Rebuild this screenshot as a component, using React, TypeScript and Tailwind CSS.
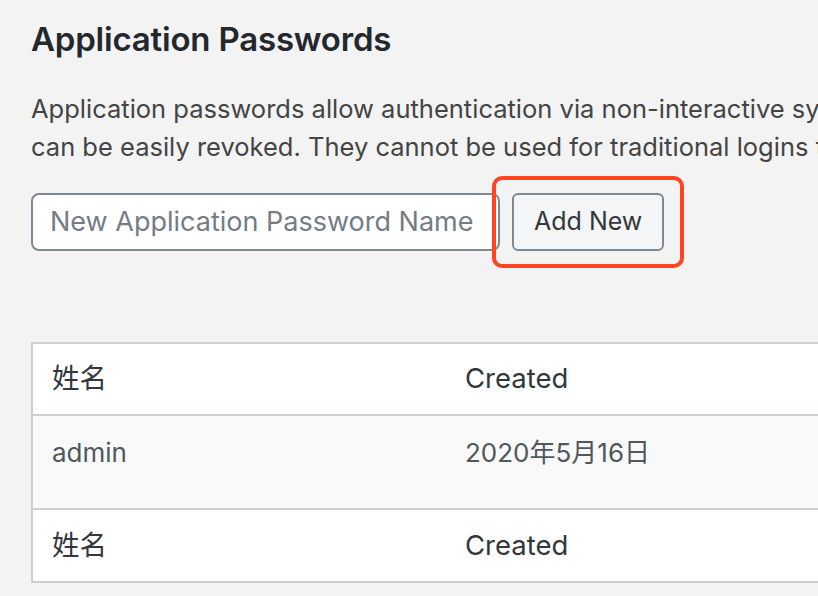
import React from 'react';

const font = "font-['Inter','Noto_Sans_CJK_SC',sans-serif]";

export default function App() {
  return (
    <div className={`relative w-[818px] h-[596px] overflow-hidden bg-[#f3f3f4] ${font}`}>
      <div className="pl-[31px] pt-[17px] w-[1400px]">
        <h2 className="text-[33px] leading-[44px] font-semibold text-[#23282d] tracking-[-0.2px]">
          Application Passwords
        </h2>

        <p className="mt-[29px] text-[25.5px] leading-[38px] text-[#444] whitespace-nowrap">
          Application passwords allow authentication via non-interactive systems, such as XML-RPC or the REST API, without providing your actual password. Application passwords
          <br />
          can be easily revoked. They cannot be used for traditional logins to your website.
        </p>

        {/* Create form */}
        <div className="mt-[27px] flex items-center">
          <div className="w-[469px] h-[58px] flex items-center px-[17px] bg-white border-2 border-[#7e8993] rounded-[8px]">
            <span className="text-[27px] text-[#757c84] whitespace-nowrap">New Application Password Name</span>
          </div>
          <div className="relative ml-[12px]">
            <button className="h-[58px] px-[20px] bg-[#f3f5f6] border-2 border-[#7e8993] rounded-[6px] text-[25px] text-[#32373c]">
              Add New
            </button>
            {/* annotation frame */}
            <div className="absolute left-[-20px] top-[-17px] w-[192px] h-[92px] border-[4px] border-[#ff4422] rounded-[10px]" />
          </div>
        </div>

        {/* List table */}
        <div className="mt-[91px] w-[1200px] bg-white border-2 border-[#ccd0d4]">
          <div className="flex h-[72px] items-center border-b-2 border-[#ccd0d4] text-[27.5px] text-[#32373c]">
            <div className="w-[412px] pl-[19px]">姓名</div>
            <div className="pl-[20px]">Created</div>
          </div>
          <div className="flex h-[94px] pt-[17px] bg-[#f9f9f9] border-b-2 border-[#ccd0d4] text-[26px] text-[#50575e]">
            <div className="w-[412px] pl-[19px]">admin</div>
            <div className="pl-[20px]">2020年5月16日</div>
          </div>
          <div className="flex h-[71px] items-center text-[27.5px] text-[#32373c]">
            <div className="w-[412px] pl-[19px]">姓名</div>
            <div className="pl-[20px]">Created</div>
          </div>
        </div>
      </div>
    </div>
  );
}
